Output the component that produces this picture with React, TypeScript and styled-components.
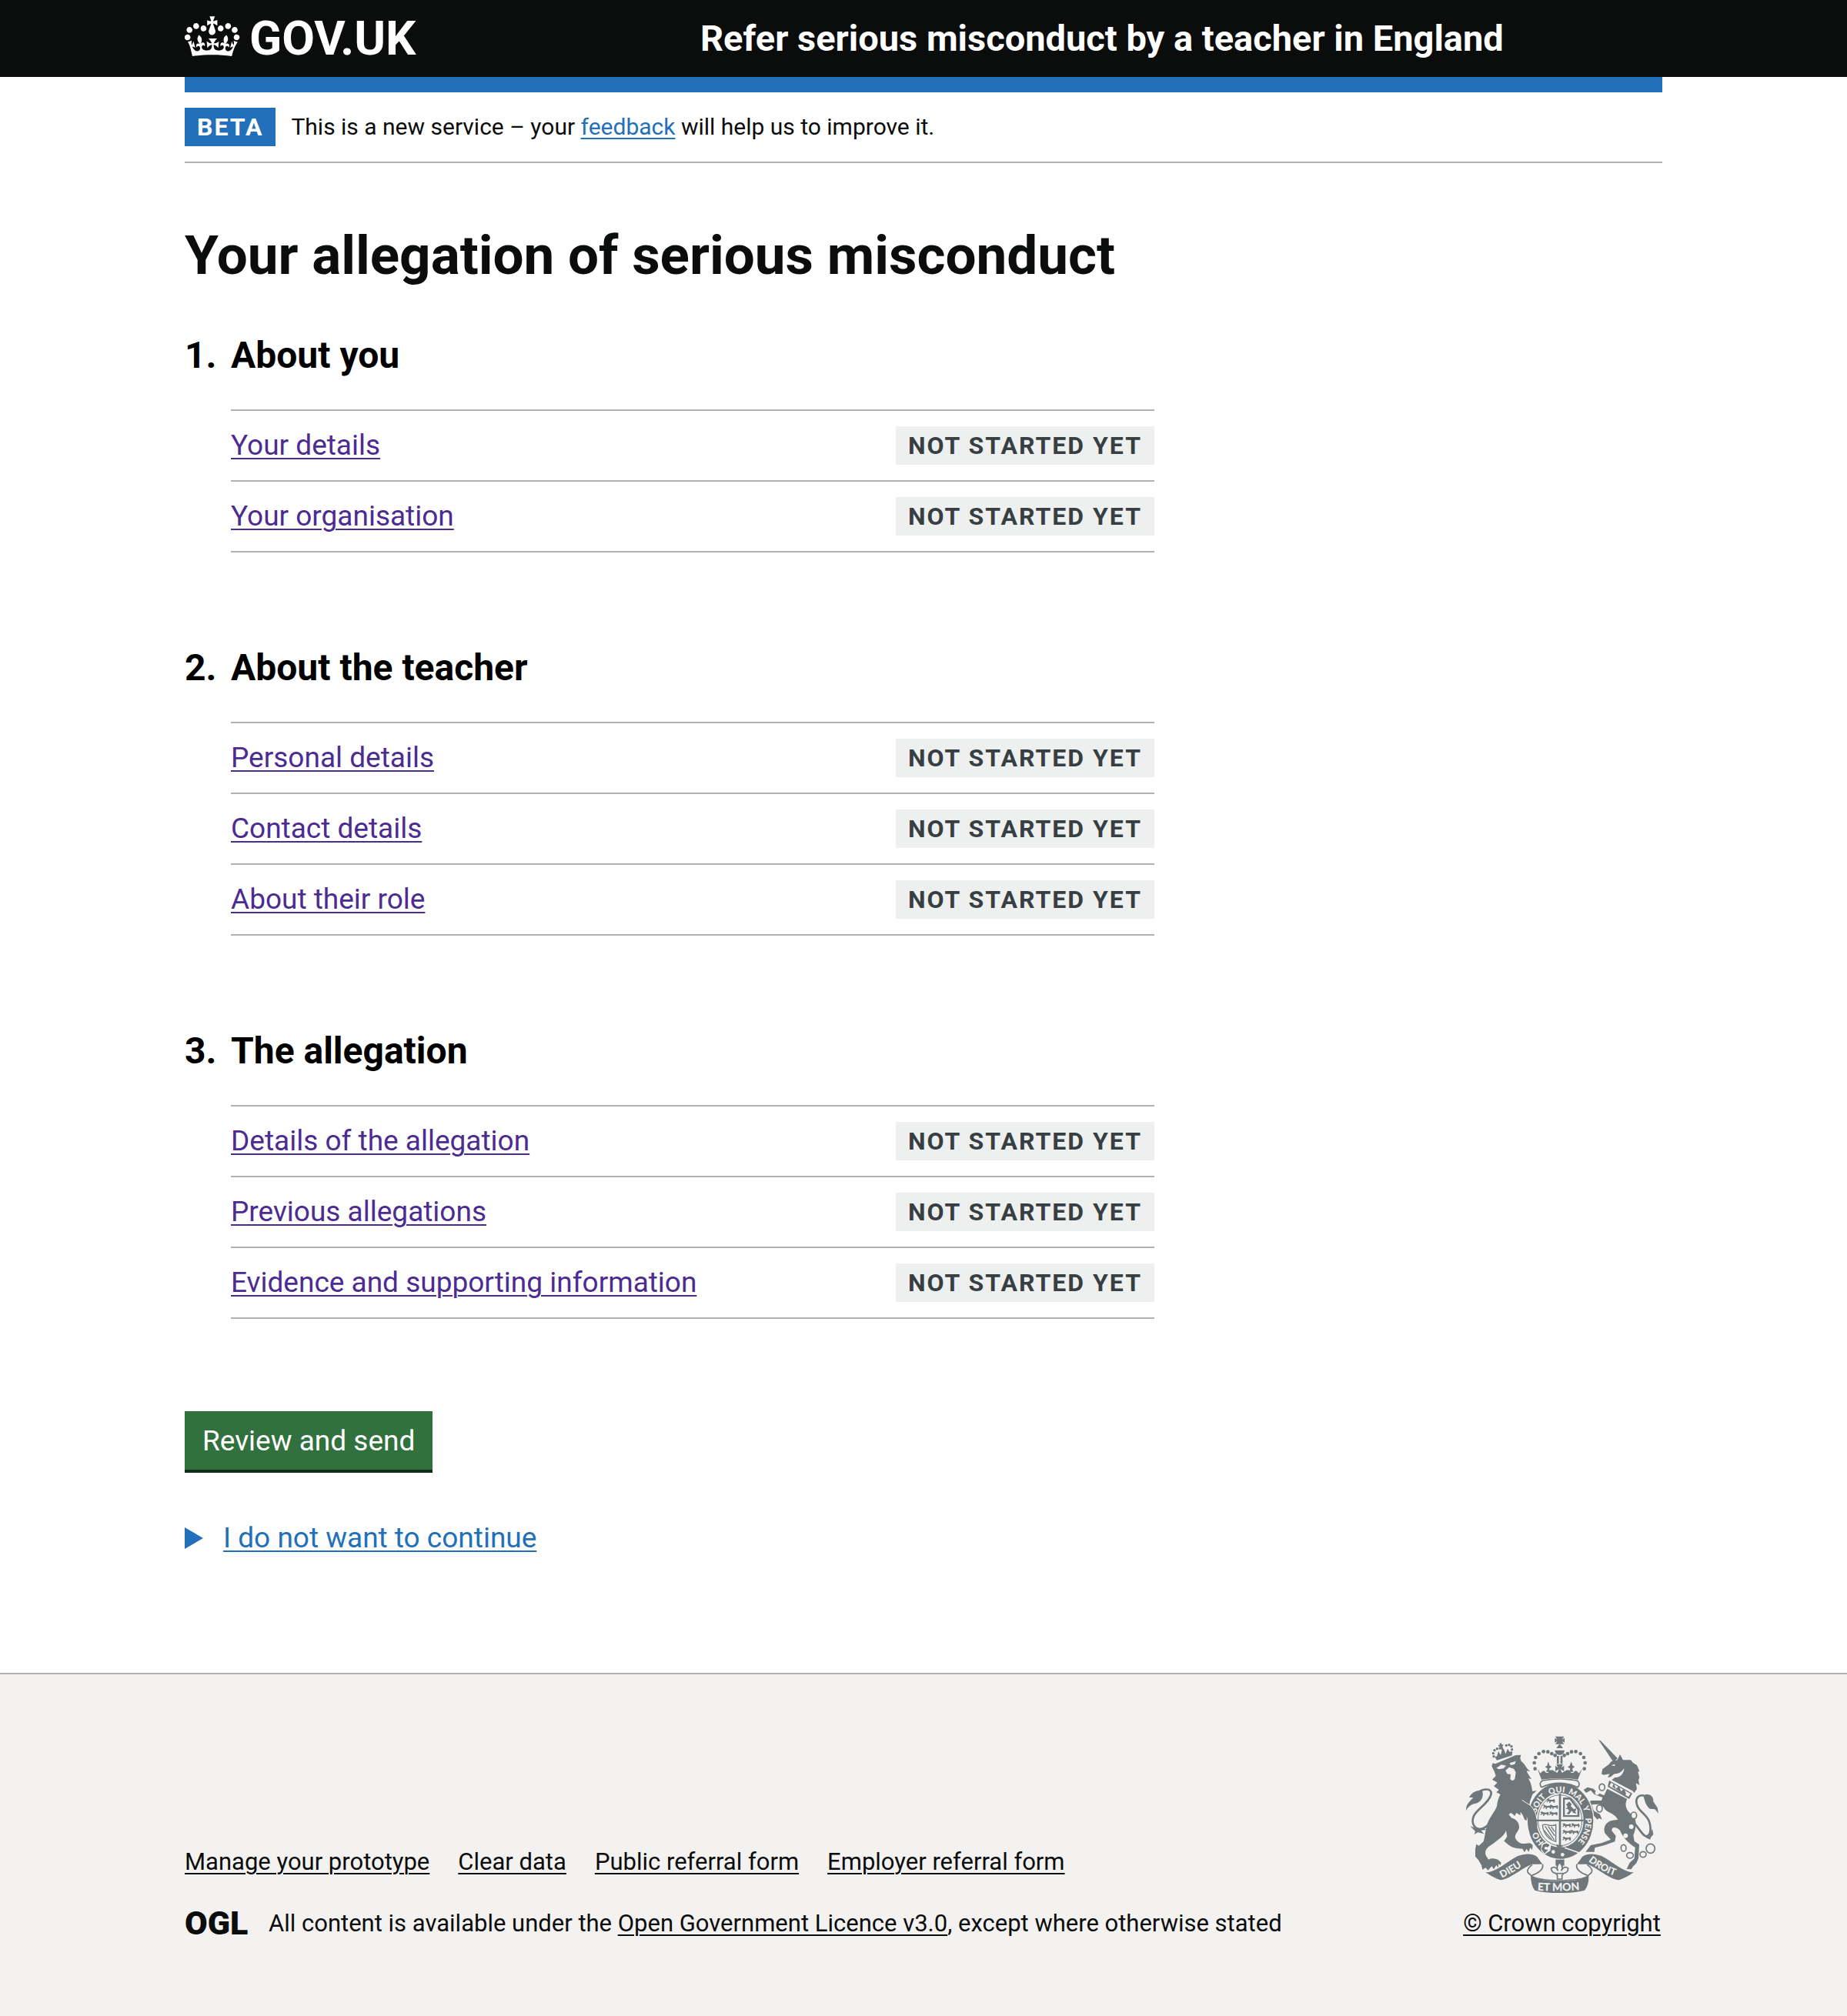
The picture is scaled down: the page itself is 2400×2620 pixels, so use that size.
import React from "react";
import styled, { createGlobalStyle } from "styled-components";

const color = {
  black: "#0b0c0c",
  brand: "#2270b9",
  green: "#30713d",
  greenShadow: "#102c1b",
  visited: "#4c2c92",
  border: "#b1b4b6",
  tagBg: "#eeefef",
  tagText: "#383f43",
  footer: "#f3f2f1",
  crest: "#6f777b",
  white: "#ffffff",
};

const GlobalStyle = createGlobalStyle`
  *, *::before, *::after { box-sizing: border-box; }
  body {
    margin: 0;
    background: ${color.white};
    color: ${color.black};
    font-family: Roboto, "Liberation Sans", Arial, sans-serif;
    font-size: 37px;
    line-height: 50px;
  }
  h1, h2, p, ul, ol { margin: 0; padding: 0; }
  ul, ol { list-style: none; }
`;

const Container = styled.div`
  width: 80%;
  max-width: 1920px;
  margin: 0 auto;
`;

const Link = styled.a<{ $tone?: string }>`
  color: ${(p) => p.$tone ?? color.black};
  text-decoration: underline;
  text-decoration-thickness: 2px;
  text-underline-offset: 4px;
`;

const Header = styled.header`
  background: ${color.black};
  color: ${color.white};
`;

const HeaderGrid = styled(Container)`
  display: grid;
  grid-template-columns: 1fr 2fr;
  align-items: center;
  min-height: 100px;
`;

const Logo = styled.a`
  display: flex;
  align-items: center;
  gap: 12px;
  color: inherit;
  text-decoration: none;
  font-size: 62px;
  line-height: 80px;
  font-weight: 700;
`;

const ServiceName = styled.a`
  padding-left: 30px;
  color: inherit;
  text-decoration: none;
  font-size: 47px;
  line-height: 60px;
  font-weight: 700;
`;

const BrandBar = styled(Container)`
  height: 20px;
  background: ${color.brand};
`;

const PhaseBanner = styled(Container)`
  display: flex;
  align-items: center;
  gap: 20px;
  padding: 20px 0;
  border-bottom: 2px solid ${color.border};
  font-size: 30px;
  line-height: 40px;
`;

const Tag = styled.strong<{ $solid?: boolean }>`
  padding: 5px 16px;
  background: ${(p) => (p.$solid ? color.brand : color.tagBg)};
  color: ${(p) => (p.$solid ? color.white : color.tagText)};
  font-size: 32px;
  line-height: 40px;
  font-weight: 700;
  letter-spacing: 2px;
  text-transform: uppercase;
  white-space: nowrap;
`;

const Main = styled.main`
  width: calc((100% + 60px) * 2 / 3 - 60px);
  padding: 80px 0 150px;
`;

const Title = styled.h1`
  margin-bottom: 60px;
  font-size: 71px;
  line-height: 80px;
  font-weight: 700;
`;

const Sections = styled.ol`
  display: flex;
  flex-direction: column;
  gap: 120px;
  margin-bottom: 120px;
`;

const SectionTitle = styled.h2`
  display: grid;
  grid-template-columns: 60px 1fr;
  margin-bottom: 40px;
  color: #000000;
  font-size: 48px;
  line-height: 60px;
  font-weight: 700;
`;

const TaskList = styled.ul`
  margin-left: 60px;
  border-top: 2px solid ${color.border};
`;

const Task = styled.li`
  display: flex;
  align-items: center;
  justify-content: space-between;
  padding: 20px 0;
  border-bottom: 2px solid ${color.border};
`;

const Button = styled.button`
  display: block;
  margin: 0 0 64px;
  padding: 14px 23px 12px;
  border: 0;
  background: ${color.green};
  box-shadow: 0 4px 0 ${color.greenShadow};
  color: ${color.white};
  font: inherit;
`;

const Summary = styled.summary`
  display: flex;
  align-items: center;
  gap: 26px;
  color: ${color.brand};
  cursor: pointer;

  &::-webkit-details-marker { display: none; }
  &::before {
    content: "";
    border-style: solid;
    border-width: 14px 0 14px 24px;
    border-color: transparent transparent transparent currentColor;
  }
`;

const SummaryText = styled.span`
  text-decoration: underline;
  text-decoration-thickness: 2px;
  text-underline-offset: 4px;
`;

const Footer = styled.footer`
  padding: 80px 0 100px;
  border-top: 2px solid ${color.border};
  background: ${color.footer};
  font-size: 31px;
  line-height: 40px;
`;

const FooterRow = styled(Container)`
  display: flex;
  align-items: flex-end;
  justify-content: space-between;
  gap: 60px;
`;

const FooterMeta = styled.div`
  display: flex;
  flex-direction: column;
  gap: 40px;
`;

const FooterLinks = styled.ul`
  display: flex;
  flex-wrap: wrap;
  gap: 20px 37px;
`;

const Licence = styled.div`
  display: flex;
  align-items: center;
  gap: 21px;
`;

const Copyright = styled.div`
  display: flex;
  flex-direction: column;
  align-items: center;
  gap: 20px;
  min-width: 261px;
  white-space: nowrap;
`;

const Crown = () => (
  <svg width="72" height="58" viewBox="0 4 36 29" fill="currentColor" aria-hidden="true">
    <path d="M6.7 12.2c1 .4 2.1-.1 2.5-1s-.1-2.1-1-2.5c-1-.4-2.1.1-2.5 1-.4 1 0 2.1 1 2.5m-4.3 2.5c1 .4 2.1-.1 2.5-1s-.1-2.1-1-2.5c-1-.4-2.1.1-2.5 1-.5 1 0 2.1 1 2.5m-1.3 4.8c1 .4 2.1-.1 2.5-1 .4-1-.1-2.1-1-2.5-1-.4-2.1.1-2.5 1-.4 1 0 2.1 1 2.5m10.4-5.8c1 .4 2.1-.1 2.5-1s-.1-2.1-1-2.5c-1-.4-2.1.1-2.5 1s0 2.1 1 2.5m17.4-1.5c-1 .4-2.1-.1-2.5-1s.1-2.1 1-2.5c1-.4 2.1.1 2.5 1 .5 1 0 2.1-1 2.5m4.3 2.5c-1 .4-2.1-.1-2.5-1s.1-2.1 1-2.5c1-.4 2.1.1 2.5 1 .5 1 0 2.1-1 2.5m1.3 4.8c-1 .4-2.1-.1-2.5-1-.4-1 .1-2.1 1-2.5 1-.4 2.1.1 2.5 1 .4 1 0 2.1-1 2.5m-10.4-5.8c-1 .4-2.1-.1-2.5-1s.1-2.1 1-2.5c1-.4 2.1.1 2.5 1s0 2.1-1 2.5m-5.3-4.9 2.4 1.3V6.5l-2.4.8c-.1-.1-.1-.2-.2-.2s1-3 1-3h-3.4l1 3c-.1.1-.2.1-.2.2-.1.1-2.4-.7-2.4-.7v3.5L17 8.8c-.1.1 0 .2.1.3l-1.4 4.2c-.1.2-.1.4-.1.7 0 1.1.8 2.1 1.9 2.2h.6C19.2 16 20 15.1 20 14c0-.2 0-.4-.1-.7l-1.4-4.2c.2-.1.3-.2.3-.3m-1 20.3c4.6 0 8.9.3 12.8.9 1.1-4.6 2.4-7.2 3.8-9.1l-2.6-.9c.3 1.3.3 1.9 0 2.8-.4-.4-.8-1.2-1.1-2.4l-1.2 4.2c.8-.5 1.4-.9 2-.9-1.2 2.6-2.7 3.2-3.6 3-1.2-.2-1.7-1.3-1.5-2.2.3-1.3 1.6-1.6 2.2-.1 1.2-2.4-.8-3.1-2.1-2.4 1.9-1.9 2.2-3.6.6-5.7-2.2 1.7-2.2 3.3-1.2 5.6-1.3-1.5-3.3-.7-2.5 1.7.9-1.4 2.1-.5 2 .8-.2 1.2-1.7 2.1-3.7 1.9-2.8-.2-2.9-2.2-2.9-3.7.7-.1 1.9.5 3 2l.4-4.4c-1.1 1.2-2.2 1.4-3.3 1.4.4-1.2 2.1-3.1 2.1-3.1h-5.5s1.8 2 2.1 3.1c-1.1 0-2.2-.3-3.3-1.4l.4 4.4c1.1-1.5 2.3-2.1 3-2-.1 1.6-.1 3.5-2.9 3.7-1.9.2-3.5-.7-3.7-1.9-.2-1.3 1-2.2 1.9-.8.7-2.4-1.2-3.2-2.5-1.7 1-2.3.9-3.9-1.2-5.6-1.6 2.1-1.3 3.8.6 5.7-1.3-.7-3.2 0-2.1 2.4.6-1.5 1.9-1.1 2.2.1.2.9-.4 1.9-1.5 2.2-.9.2-2.4-.4-3.6-3 .7 0 1.3.4 2 .9L5.700 20.3c-.3 1.1-.7 1.9-1.1 2.4-.3-.9-.2-1.500 0-2.800l-2.600.9C3.400 22.900 3.900 25.400 5 30 9 29.400 13.200 29.100 17.800 29.100" />
  </svg>
);

const OglText = styled.text`
  font: 900 43px Roboto, "Liberation Sans", sans-serif;
`;

const OglLogo = () => (
  <svg width="88" height="40" viewBox="0 0 88 40" role="img" aria-label="Open Government Licence">
    <OglText x="0" y="34" fill={color.black}>OGL</OglText>
  </svg>
);

const MottoText = styled.text<{ $size: number }>`
  font-family: Lato, sans-serif;
  font-weight: 900;
  font-size: ${(p) => p.$size}px;
  fill: ${color.footer};
`;

const garterWords: [string, number][] = [
  ["HO", 39], ["SOIT", 107], ["QUI", 156], ["MAL", 196], ["Y", 240], ["PENSE", 264],
];

const pearls: [number, number][] = [
  [341, 206], [338, 183], [343, 162], [356, 147], [374, 139], [391, 140], [406, 147], [419, 154],
];

const lionPearls: [number, number][] = [
  [180, 158], [178, 146], [183, 134], [193, 128], [204, 126], [229, 115], [240, 113], [249, 119], [251, 131], [248, 143],
];

const lionsPassant: [number, number][] = [
  [386, 322], [372, 346], [398, 346], [362, 372], [396, 372], [448, 418], [482, 418], [448, 444], [478, 444], [448, 470],
];

const chain: [number, number, number, number][] = [
  [602, 278, 11, 13], [592, 361, 11, 14], [726, 388, 11, 13], [686, 515, 10, 13], [711, 544, 13, 11], [762, 540, 12, 11], [791, 517, 17, 18],
];

const Crest = () => (
  <svg width="250" height="204" viewBox="72 78 750 612" fill={color.crest} aria-hidden="true">
    <defs>
      <path id="garter" pathLength="360" d="M440 520 A98 111 0 0 1 440 298 A98 111 0 0 1 440 520" />
      <path id="dieu" d="M212 632 Q262 608 318 566" />
      <path id="mon" d="M350 680 Q437 686 526 678" />
      <path id="droit" d="M548 566 Q606 612 672 630" />
      <g id="passant">
        <path d="M0 3 L6 0 L11 4 L22 5 L30 2 L33 8 L31 16 L27 16 L26 11 L16 12 L14 18 L10 17 L11 11 L6 11 L2 16 L0 13 L4 8 Z" />
      </g>
    </defs>

    {/* lion */}
    <path d="M172 196 L176 184 L186 187 L266 153 L286 152 L283 166 L288 178 C302 186 304 204 322 216 L308 214 C312 226 320 236 327 246 L314 244 C324 256 328 276 331 294 L348 291 L331 306 L322 330 L318 352 C336 364 342 384 346 404 L347 438 L340 430 L334 442 L328 432 L318 436 L322 424 L310 426 L312 410 L300 404 C296 392 292 382 284 374 L284 388 L268 378 L262 390 L248 378 L238 384 L250 398 C266 402 280 414 279 436 C276 452 260 462 264 476 C272 492 286 500 300 498 L322 496 L332 504 L330 522 L322 514 L316 530 L308 518 L300 532 L292 518 C270 518 248 514 232 498 L220 488 L232 470 L228 446 C222 468 192 486 172 502 C152 514 142 528 150 546 L160 560 C172 552 190 556 198 562 L209 572 L206 582 L198 576 L198 592 L190 582 L180 598 L172 586 L158 602 L148 592 L136 600 L132 582 L120 562 L108 548 L108 520 L112 500 L122 506 L140 490 C146 468 146 452 152 432 C158 400 186 374 192 352 C194 334 198 320 206 306 L190 298 L200 288 L180 274 L194 260 L174 248 L188 234 L183 218 Z" />
    <g fill={color.footer}>
      <path d="M190 203 L210 190 L228 194 L218 205 L200 208 Z M242 184 L266 176 L262 188 L246 192 Z" />
      <path d="M226 212 L240 200 L258 206 L266 220 L262 246 Q253 258 244 246 L246 228 L232 226 Z" />
    </g>
    <g stroke={color.crest} fill="none" strokeWidth="8" strokeLinecap="round">
      <path d="M112 302 C142 280 172 282 170 304 C164 338 116 362 102 390 C90 420 106 446 134 440 C158 432 168 414 190 390" />
      <path d="M740 352 C728 322 744 308 762 310" />
      <path d="M740 352 C750 376 776 384 786 412 C796 444 790 474 770 468 C752 456 746 436 724 414" />
    </g>
    <path d="M72 370 C72 342 82 340 100 318 L84 318 C98 294 116 288 136 294 C142 318 128 340 106 342 C88 346 78 358 72 370 Z" />
    <path d="M88 430 L112 438 L140 438 L152 444 L130 446 L142 460 L118 454 L104 462 L108 450 Z" />
    {lionPearls.map(([x, y]) => (
      <circle key={x} cx={x} cy={y} r="5" />
    ))}
    <path d="M184 160 L250 140 L252 154 L192 173 Z M192 158 L198 138 L207 153 L212 132 L219 128 L226 148 L234 128 L244 143 Z M198 112 L204 114 L203 107 L210 106 L211 112 L218 112 L214 119 L218 132 L209 132 L206 120 L199 119 Z" />

    {/* unicorn */}
    <path d="M588 93 L598 98 L663 166 L646 180 L624 146 Z" />
    <path d="M600 226 L604 207 L628 190 L638 178 L662 172 L672 150 L684 172 L714 172 L722 182 L738 192 L748 216 L742 218 L748 240 L744 250 L748 270 L734 262 L738 284 L728 300 L720 292 L640 250 L652 240 C674 242 688 222 688 204 C676 222 664 226 650 226 L636 238 L624 240 L632 226 L608 230 Z" />
    <path fill={color.footer} d="M638 192 L652 188 L652 196 Z" />
    <path d="M630 252 L720 302 L708 324 L624 276 Z M637 260 L631 274 L705 315 L713 303 Z" fillRule="evenodd" />
    <path d="M642 276 L648 264 L656 284 L668 274 L676 294 L688 284 L696 304 L692 310 Z" />
    <path d="M622 284 L700 324 C688 346 696 368 718 386 L730 398 C738 424 732 444 724 466 L728 488 L747 502 L744 556 L736 574 L722 588 L716 598 L698 597 L710 572 L728 556 L731 512 C704 496 682 472 672 446 C656 430 638 432 640 448 L656 468 L652 490 L612 504 L574 514 L572 530 L538 530 L558 504 L600 496 L636 482 L614 458 C604 436 618 412 640 408 L664 404 C648 374 620 380 608 356 L592 344 L562 346 L570 370 L594 384 L602 404 L590 398 L584 404 L562 380 L550 352 L546 336 L562 330 L600 330 L604 318 L572 306 L558 290 L540 300 L530 288 L546 278 L568 284 L586 300 L610 310 Z" />
    <path d="M762 310 C790 298 804 318 802 334 L818 358 L822 380 L808 364 L788 362 C770 348 770 330 762 310 Z" />
    <path d="M760 462 L786 470 L798 440 L802 462 L792 474 L790 482 L776 476 Z" />
    <g fill={color.footer} stroke={color.crest} strokeWidth="5">
      {chain.map(([cx, cy, rx, ry]) => (
        <ellipse key={`${cx}-${cy}`} cx={cx} cy={cy} rx={rx} ry={ry} />
      ))}
    </g>
    <g fill={color.footer}>
      <circle cx="716" cy="432" r="9" />
      <circle cx="694" cy="467" r="9" />
      <circle cx="583" cy="300" r="8" />
    </g>

    {/* garter and shield */}
    <ellipse cx="440" cy="409" rx="132" ry="153" fill={color.footer} />
    <ellipse cx="440" cy="409" rx="128" ry="148" />
    <ellipse cx="438" cy="407" rx="92" ry="106" fill={color.footer} />
    <ellipse cx="438" cy="407" rx="86" ry="99" fill="none" stroke={color.crest} strokeWidth="3" />
    <path d="M434 304 H442 V512 H434 Z M348 404 H530 V411 H348 Z" />
    {lionsPassant.map(([x, y]) => (
      <use key={`${x}-${y}`} href="#passant" x={x} y={y} />
    ))}
    <path d="M450 318 H480 L514 362 V394 H450 Z M457 326 V387 H506 V366 L476 326 Z" fillRule="evenodd" />
    <path d="M462 346 L474 334 L484 344 L480 352 L492 364 L502 360 L498 374 L502 382 L490 378 L484 370 L474 384 L464 382 L474 370 L468 362 L460 364 L468 354 Z" />
    <g fill="none" stroke={color.crest} strokeWidth="4">
      <path d="M370 426 C386 416 400 436 422 424 V490 C396 484 374 462 370 426 Z" />
      <path d="M380 430 L416 484 M392 430 L418 468 M404 432 L418 452 M376 446 L406 482" />
    </g>
    <path d="M424 500 L452 510 L428 516 Z" />
    <path d="M366 500 Q384 484 404 500 L400 526 L378 540 L364 524 Z" fill={color.footer} />
    <path d="M372 502 Q386 492 398 504 L390 512 Q376 506 378 520 L392 522 L378 536 L366 520 Z" />
    <circle cx="412" cy="530" r="7" fill={color.footer} />
    <circle cx="448" cy="541" r="7" fill={color.footer} />
    <path d="M456 514 L514 534" stroke={color.footer} strokeWidth="5" />
    {garterWords.map(([word, offset]) => (
      <MottoText key={word} $size={32}>
        <textPath href="#garter" startOffset={offset}>{word}</textPath>
      </MottoText>
    ))}
    <path d="M290 330 L322 348 C344 366 348 398 350 430 L342 438 L332 442 L322 438 L314 430 L312 404 Z" />
    <path d="M290 328 L324 350 Q344 372 348 402" fill="none" stroke={color.footer} strokeWidth="3" />

    {/* crown */}
    <path d="M420 80 H454 L446 92 L456 86 V104 L446 98 L454 110 H420 L428 98 L418 104 V86 L428 92 Z M424 126 L434 112 H440 L450 126 Z M418 134 H456 Q454 152 437 152 Q420 152 418 134 Z M426 156 H434 V186 H426 Z M440 156 H448 V186 H440 Z" />
    {pearls.map(([x, y]) => (
      <React.Fragment key={x}>
        <circle cx={x} cy={y} r="7" />
        <circle cx={874 - x} cy={y} r="7" />
      </React.Fragment>
    ))}
    <path d="M350 206 L362 224 Q374 204 384 222 L392 222 Q400 204 414 214 L428 222 L434 208 L420 216 V194 L430 202 L424 188 H450 L444 202 L454 194 V216 L440 208 L446 222 L460 214 Q474 204 482 222 L490 222 Q500 204 512 224 L524 206 L508 248 Q437 238 366 248 Z" />
    <path d="M384 218 L390 206 L380 198 L388 194 L392 178 L398 194 L406 198 L396 206 L400 218 Z M474 218 L478 206 L468 198 L476 194 L482 178 L488 194 L496 198 L486 206 L490 218 Z" />
    <path d="M370 252 Q437 240 504 252 Q520 262 508 278 Q437 246 366 278 Q354 262 370 252 Z" fill={color.footer} stroke={color.crest} strokeWidth="5" />

    {/* ribbon */}
    <path d="M148 610 C190 610 230 568 274 546 Q318 530 348 548 L370 578 L330 578 C292 590 246 636 206 640 Q180 632 148 610 Z" />
    <path d="M726 610 C684 610 644 568 600 546 Q556 530 526 548 L504 578 L544 578 C582 590 628 636 668 640 Q694 632 726 610 Z" />
    <path d="M330 580 Q306 598 314 612 L330 626 Q352 640 437 642 Q522 640 544 626 L560 612 Q570 598 544 580" fill={color.footer} stroke={color.crest} strokeWidth="5" />
    <path d="M370 578 Q378 604 328 622 M504 578 Q496 604 546 622" fill="none" stroke={color.crest} strokeWidth="5" />
    <path d="M324 620 Q350 644 437 644 Q524 644 550 620 Q552 660 534 680 Q500 690 437 690 Q374 690 340 680 Q324 660 324 620 Z" />
    <MottoText $size={38}><textPath href="#dieu">DIEU</textPath></MottoText>
    <MottoText $size={42}><textPath href="#mon">ET MON</textPath></MottoText>
    <MottoText $size={38}><textPath href="#droit">DROIT</textPath></MottoText>
    <path d="M421 560 H455 V584 H421 Z" />
    <path d="M437 572 Q454 588 443 604 Q454 582 470 594 Q470 610 452 614 L446 622 V636 H428 V622 L422 614 Q404 610 404 594 Q420 582 431 604 Q420 588 437 572 Z" fill={color.footer} stroke={color.crest} strokeWidth="5" />
    <path d="M424 614 H450" stroke={color.crest} strokeWidth="5" />
  </svg>
);

const sections = [
  { title: "About you", tasks: ["Your details", "Your organisation"] },
  { title: "About the teacher", tasks: ["Personal details", "Contact details", "About their role"] },
  { title: "The allegation", tasks: ["Details of the allegation", "Previous allegations", "Evidence and supporting information"] },
];

const footerLinks = ["Manage your prototype", "Clear data", "Public referral form", "Employer referral form"];

export default function App() {
  return (
    <>
      <GlobalStyle />
      <Header>
        <HeaderGrid>
          <Logo href="#">
            <Crown />
            GOV.UK
          </Logo>
          <ServiceName href="#">Refer serious misconduct by a teacher in England</ServiceName>
        </HeaderGrid>
      </Header>
      <BrandBar />
      <PhaseBanner>
        <Tag $solid>Beta</Tag>
        <span>
          This is a new service – your <Link href="#" $tone={color.brand}>feedback</Link> will help us to improve it.
        </span>
      </PhaseBanner>
      <Container>
        <Main>
          <Title>Your allegation of serious misconduct</Title>
          <Sections>
            {sections.map((section, index) => (
              <li key={section.title}>
                <SectionTitle>
                  <span>{index + 1}.</span>
                  <span>{section.title}</span>
                </SectionTitle>
                <TaskList>
                  {section.tasks.map((task) => (
                    <Task key={task}>
                      <Link href="#" $tone={color.visited}>{task}</Link>
                      <Tag>Not started yet</Tag>
                    </Task>
                  ))}
                </TaskList>
              </li>
            ))}
          </Sections>
          <Button type="button">Review and send</Button>
          <details>
            <Summary>
              <SummaryText>I do not want to continue</SummaryText>
            </Summary>
          </details>
        </Main>
      </Container>
      <Footer>
        <FooterRow>
          <FooterMeta>
            <FooterLinks>
              {footerLinks.map((label) => (
                <li key={label}>
                  <Link href="#">{label}</Link>
                </li>
              ))}
            </FooterLinks>
            <Licence>
              <OglLogo />
              <span>
                All content is available under the <Link href="#">Open Government Licence v3.0</Link>, except where otherwise stated
              </span>
            </Licence>
          </FooterMeta>
          <Copyright>
            <Crest />
            <Link href="#">© Crown copyright</Link>
          </Copyright>
        </FooterRow>
      </Footer>
    </>
  );
}
